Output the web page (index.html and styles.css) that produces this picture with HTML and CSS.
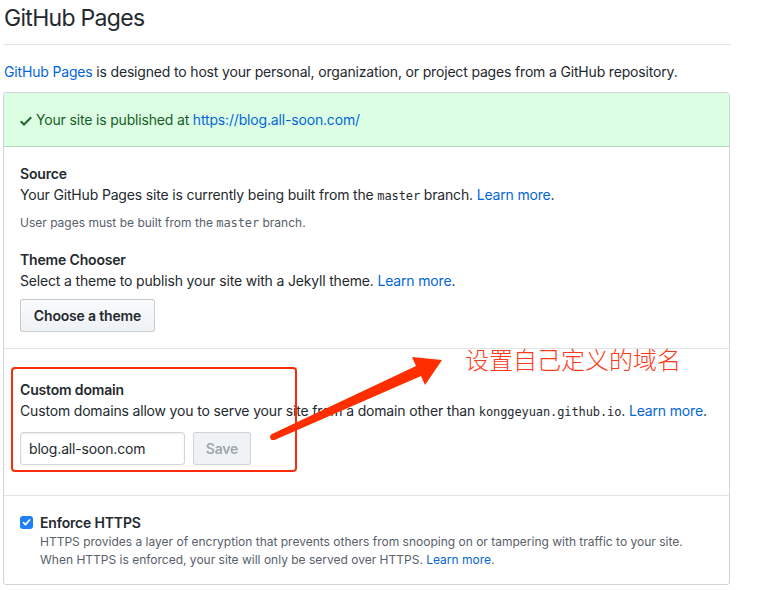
FILE: index.html
```html
<!DOCTYPE html>
<html lang="en">
<head>
<meta charset="utf-8">
<title>GitHub Pages</title>
<link rel="stylesheet" href="styles.css">
</head>
<body>
<div class="page">
  <div class="subhead"><h2 class="subhead-title">GitHub Pages</h2></div>
  <p class="intro"><a href="#">GitHub Pages</a> is designed to host your personal, organization, or project pages from a GitHub repository.</p>

  <div class="box">
    <div class="flash">
      <svg class="check" width="12" height="16" viewBox="0 0 12 16"><path d="M12 5l-8 8-4-4 1.5-1.5L4 10l6.5-6.5L12 5z"/></svg>
      <span>Your site is published at <a href="#">https://blog.all-soon.com/</a></span>
    </div>

    <div class="row">
      <h4 class="label">Source</h4>
      <p class="text">Your GitHub Pages site is currently being built from the <code>master</code> branch. <a href="#">Learn more</a>.</p>
      <p class="note">User pages must be built from the <code>master</code> branch.</p>
      <h4 class="label label-gap">Theme Chooser</h4>
      <p class="text">Select a theme to publish your site with a Jekyll theme. <a href="#">Learn more</a>.</p>
      <button class="btn btn-theme">Choose a theme</button>
    </div>

    <div class="row row-domain">
      <h4 class="label">Custom domain</h4>
      <p class="text">Custom domains allow you to serve your site from a domain other than <code>konggeyuan.github.io</code>. <a href="#">Learn more</a>.</p>
      <div class="domain-form">
        <input class="input" type="text" value="blog.all-soon.com">
        <button class="btn btn-save" disabled>Save</button>
      </div>
    </div>

    <div class="row row-https">
      <div class="check-row">
        <span class="checkbox"><svg width="9" height="9" viewBox="0 0 9 9"><path d="M1.5 4.6l2 2 4-4.6" fill="none" stroke="#fff" stroke-width="1.7" stroke-linecap="round" stroke-linejoin="round"/></svg></span>
        <div class="check-body">
          <h4 class="label">Enforce HTTPS</h4>
          <p class="small">HTTPS provides a layer of encryption that prevents others from snooping on or tampering with traffic to your site.<br>When HTTPS is enforced, your site will only be served over HTTPS. <a href="#">Learn more</a>.</p>
        </div>
      </div>
    </div>
  </div>

  <div class="annot-box"></div>
  <svg class="annot-arrow" width="761" height="590" viewBox="0 0 761 590">
    <polygon points="272,434 416,366 412,357 442,360 425,385 421,376 274.5,440" fill="#ff2e00"/>
    <circle cx="273.2" cy="437" r="3.1" fill="#ff2e00"/>
  </svg>
  <div class="annot-text">设置自己定义的域名</div>
</div>
</body>
</html>
```

FILE: styles.css
```css
* { box-sizing: border-box; }
html, body { margin: 0; padding: 0; background: #fff; }
body {
  font-family: Inter, "Liberation Sans", Arial, sans-serif;
  font-size: 14px;
  line-height: 21px;
  letter-spacing: -0.17px;
  color: #24292e;
}
a { color: #0366d6; text-decoration: none; }
code {
  font-family: "DejaVu Sans Mono", "Liberation Mono", monospace;
  font-size: 12px;
  letter-spacing: -0.1px;
  line-height: 1;
}
.page {
  position: relative;
  width: 761px;
  height: 590px;
  padding-left: 3px;
  overflow: hidden;
}
.subhead {
  width: 727px;
  padding-top: 3px;
  padding-bottom: 11px;
  border-bottom: 1px solid #e1e4e8;
  margin-left: 1px;
}
.subhead-title {
  margin: 0;
  font-size: 23px;
  line-height: 30px;
  font-weight: 400;
  letter-spacing: -0.7px;
}
.intro {
  margin: 16px 0 10px 1px;
  line-height: 21px;
}
.box {
  width: 727px;
  border: 1px solid #d1d5da;
  border-radius: 3px;
}
.flash {
  display: flex;
  align-items: center;
  gap: 4px;
  padding: 17px 16px 16px 16px;
  line-height: 20px;
  background: #dcffe4;
  color: #165c26;
  border-bottom: 1px solid #acdcb8;
}
.check { fill: #1e6b2e; margin-top: 1px; }
.row {
  padding: 16px 16px;
  border-bottom: 1px solid #e1e4e8;
}
.row:last-child { border-bottom: 0; padding-bottom: 15px; }
.label {
  margin: 0;
  font-size: 14px;
  line-height: 21px;
  font-weight: 600;
}
.label-gap { margin-top: 17px; }
.text { margin: 0; }
.note {
  margin: 9px 0 0;
  font-size: 12px;
  line-height: 18px;
  letter-spacing: 0;
  color: #586069;
}
.btn {
  display: inline-block;
  font-family: inherit;
  font-size: 14px;
  font-weight: 600;
  letter-spacing: -0.17px;
  line-height: 19px;
  padding: 6px 0;
  white-space: nowrap;
  text-align: center;
  border-radius: 3px;
  border: 1px solid rgba(27,31,35,0.2);
  color: #24292e;
  background: linear-gradient(#fafbfc, #eff3f6 90%);
}
.btn-theme { margin-top: 8px; width: 135px; height: 33px; }
.row-domain { padding-top: 30px; padding-bottom: 30px; }
.domain-form {
  display: flex;
  gap: 8px;
  margin-top: 11px;
}
.input {
  width: 165px;
  height: 33px;
  padding: 6px 8px;
  font-family: inherit;
  font-size: 14px;
  letter-spacing: -0.17px;
  color: #24292e;
  border: 1px solid #d1d5da;
  border-radius: 3px;
  box-shadow: inset 0 1px 2px rgba(27,31,35,0.075);
  outline: none;
}
.btn-save {
  width: 58px;
  height: 33px;
  color: rgba(36,41,46,0.4);
  background: #eff3f6;
  border-color: rgba(27,31,35,0.15);
}
.check-row { display: flex; align-items: flex-start; }
.checkbox {
  width: 13px;
  height: 13px;
  margin-top: 4px;
  margin-right: 7px;
  border-radius: 3px;
  background: #1f7ff5;
  display: flex;
  align-items: center;
  justify-content: center;
  flex: none;
}
.small {
  margin: 0;
  font-size: 12px;
  line-height: 18px;
  letter-spacing: 0;
  color: #586069;
}
.annot-box {
  position: absolute;
  left: 11px;
  top: 367px;
  width: 286px;
  height: 105px;
  border: 2.5px solid #fb2c0b;
  border-radius: 4px;
}
.annot-arrow {
  position: absolute;
  left: 0;
  top: 0;
  pointer-events: none;
}
.annot-text {
  position: absolute;
  left: 465px;
  top: 346px;
  font-family: "Noto Sans CJK SC", sans-serif;
  font-size: 24px;
  line-height: 26px;
  font-weight: 300;
  color: #fa3c1e;
  letter-spacing: 0;
}
```
